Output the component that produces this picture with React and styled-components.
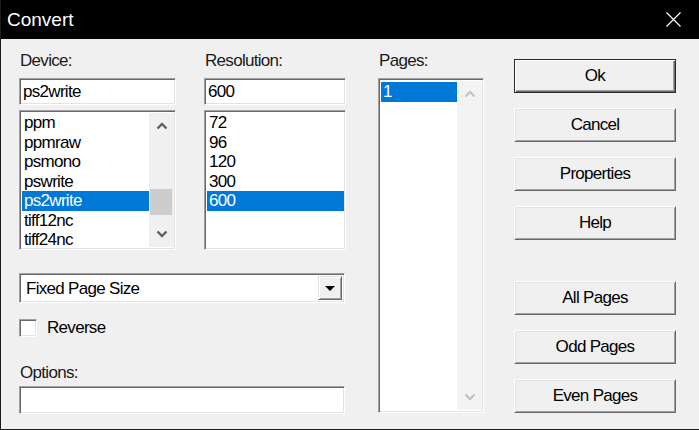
import styled, { createGlobalStyle } from "styled-components";

const GlobalStyle = createGlobalStyle`
  html, body {
    margin: 0;
    padding: 0;
    background: #f0f0f0;
  }
  body {
    font-family: "Liberation Sans", Arial, sans-serif;
  }
`;

const Window = styled.div`
  width: 699px;
  height: 430px;
  box-sizing: border-box;
  display: flex;
  flex-direction: column;
  background: #f0f0f0;
  border-left: 1px solid #1c1c1c;
  border-bottom: 1px solid #1c1c1c;
  font-family: "Liberation Sans", Arial, sans-serif;
  font-size: 17px;
  letter-spacing: -0.7px;
  color: #000;
  overflow: hidden;
`;

const TitleBar = styled.div`
  height: 39px;
  flex-shrink: 0;
  background: #000;
  color: #fff;
  display: flex;
  align-items: center;
  justify-content: space-between;
  padding: 0 18px 0 6px;
  font-size: 19px;
  letter-spacing: 0;
`;

const Client = styled.div`
  flex: 1;
  display: flex;
  padding-left: 18px;
`;

const LeftPane = styled.div`
  width: 327px;
  display: flex;
  flex-direction: column;
`;

const TopRow = styled.div`
  display: flex;
  gap: 28px;
`;

const Field = styled.div`
  width: ${p => p.$width}px;
  display: flex;
  flex-direction: column;
`;

const Label = styled.div`
  height: 20px;
  line-height: 20px;
  margin-top: ${p => p.$top ?? 12}px;
  padding-left: 1px;
  color: #1a1a1a;
`;

const sunken = `
  box-sizing: border-box;
  border: 1px solid;
  border-color: #a0a0a0 #fff #fff #a0a0a0;
  box-shadow: inset 1px 1px #696969, inset -1px -1px #e3e3e3;
  background: #fff;
`;

const TextBox = styled.div`
  ${sunken}
  width: ${p => p.$width ? `${p.$width}px` : "100%"};
  height: ${p => p.$height ?? 27}px;
  margin-top: ${p => p.$top ?? 7}px;
  padding: 1px 3px 0;
  display: flex;
  align-items: center;
`;

const ListFrame = styled.div`
  ${sunken}
  height: ${p => p.$height}px;
  margin-top: ${p => p.$top}px;
  padding: 2px 1px 2px 2px;
  display: flex;
`;

const Items = styled.div`
  flex: 1;
  display: flex;
  flex-direction: column;
  padding-top: ${p => p.$pad ?? 0}px;
`;

const Item = styled.div`
  height: 19.5px;
  line-height: 20px;
  padding-left: 2px;
  white-space: nowrap;
  background: ${p => p.$selected ? "#0078d7" : "transparent"};
  color: ${p => p.$selected ? "#fff" : "#000"};
`;

const ScrollBar = styled.div`
  width: 25px;
  display: flex;
  flex-direction: column;
  background: ${p => p.$disabled ? "#f3f3f3" : "#f0f0f0"};
`;

const ArrowBtn = styled.div`
  height: 26px;
  flex-shrink: 0;
  display: flex;
  align-items: center;
  justify-content: center;
`;

const Track = styled.div`
  flex: 1;
  display: flex;
  flex-direction: column;
  padding: 0 2px 0 1px;
`;

const Thumb = styled.div`
  height: 26px;
  margin-top: ${p => p.$offset}px;
  background: #cdcdcd;
`;

const Combo = styled.div`
  ${sunken}
  width: 326px;
  height: 30px;
  margin-top: 23px;
  padding: 2px;
  display: flex;
  align-items: center;
`;

const ComboText = styled.div`
  flex: 1;
  padding: 2px 0 0 4px;
`;

const DropButton = styled.div`
  box-sizing: border-box;
  width: 24px;
  align-self: stretch;
  background: #f0f0f0;
  border: 1px solid;
  border-color: #e3e3e3 #696969 #696969 #e3e3e3;
  box-shadow: inset 1px 1px #fff, inset -1px -1px #a0a0a0;
  display: flex;
  align-items: center;
  justify-content: center;
`;

const DownTriangle = styled.span`
  width: 0;
  height: 0;
  margin-top: 1px;
  border-left: 5px solid transparent;
  border-right: 5px solid transparent;
  border-top: 5px solid #000;
`;

const CheckRow = styled.label`
  margin-top: 15px;
  height: 19px;
  display: flex;
  align-items: center;
  gap: 10px;
`;

const CheckBox = styled.span`
  ${sunken}
  width: 18px;
  height: 18px;
`;

const PagesCol = styled.div`
  width: 106px;
  margin-left: 32px;
  display: flex;
  flex-direction: column;
`;

const ButtonsCol = styled.div`
  width: 162px;
  margin-left: 30px;
  padding-top: 20px;
  display: flex;
  flex-direction: column;
`;

const ButtonGroup = styled.div`
  display: flex;
  flex-direction: column;
  gap: 15px;
  margin-top: ${p => p.$top ?? 0}px;
`;

const Button = styled.button`
  box-sizing: border-box;
  width: 162px;
  height: 34px;
  padding: 0;
  font: inherit;
  letter-spacing: inherit;
  color: #000;
  background: #f0f0f0;
  border: 1px solid;
  border-color: ${p => p.$default ? "#2a2a2a" : "#fff #696969 #696969 #fff"};
  box-shadow: ${p => p.$default
    ? "inset 1px 1px #fff, inset -1px -1px #696969, inset -2px -2px #a0a0a0"
    : "inset 1px 1px #e3e3e3, inset -1px -1px #a0a0a0"};
  cursor: default;
`;

const Chevron = ({ up, color }) => (
  <svg width="12" height="8" viewBox="0 0 12 8">
    <polyline
      points={up ? "1.5,6.5 6,2 10.5,6.5" : "1.5,1.5 6,6 10.5,1.5"}
      fill="none"
      stroke={color}
      strokeWidth="2.4"
    />
  </svg>
);

const CloseIcon = () => (
  <svg width="15" height="15" viewBox="0 0 15 15">
    <path d="M0.5 0.5 L14.5 14.5 M14.5 0.5 L0.5 14.5" stroke="#fff" strokeWidth="1.2" />
  </svg>
);

function VScroll({ disabled, thumb }) {
  const color = disabled ? "#c3c3c3" : "#606060";
  return (
    <ScrollBar $disabled={disabled}>
      <ArrowBtn><Chevron up color={color} /></ArrowBtn>
      <Track>{thumb != null && <Thumb $offset={thumb} />}</Track>
      <ArrowBtn><Chevron color={color} /></ArrowBtn>
    </ScrollBar>
  );
}

const devices = ["ppm", "ppmraw", "psmono", "pswrite", "ps2write", "tiff12nc", "tiff24nc"];
const resolutions = ["72", "96", "120", "300", "600"];

export default function App() {
  return (
    <>
      <GlobalStyle />
      <Window>
        <TitleBar>
          <span>Convert</span>
          <CloseIcon />
        </TitleBar>
        <Client>
          <LeftPane>
            <TopRow>
              <Field $width={157}>
                <Label>Device:</Label>
                <TextBox>ps2write</TextBox>
                <ListFrame $height={140} $top={5}>
                  <Items>
                    {devices.map(d => (
                      <Item key={d} $selected={d === "ps2write"}>{d}</Item>
                    ))}
                  </Items>
                  <VScroll thumb={50} />
                </ListFrame>
              </Field>
              <Field $width={142}>
                <Label>Resolution:</Label>
                <TextBox>600</TextBox>
                <ListFrame $height={140} $top={5}>
                  <Items>
                    {resolutions.map(r => (
                      <Item key={r} $selected={r === "600"}>{r}</Item>
                    ))}
                  </Items>
                </ListFrame>
              </Field>
            </TopRow>
            <Combo>
              <ComboText>Fixed Page Size</ComboText>
              <DropButton><DownTriangle /></DropButton>
            </Combo>
            <CheckRow>
              <CheckBox />
              <span>Reverse</span>
            </CheckRow>
            <Label $top={26}>Options:</Label>
            <TextBox $width={326} $height={28} $top={3} />
          </LeftPane>
          <PagesCol>
            <Label>Pages:</Label>
            <ListFrame $height={335} $top={7}>
              <Items $pad={1}>
                <Item $selected>1</Item>
              </Items>
              <VScroll disabled />
            </ListFrame>
          </PagesCol>
          <ButtonsCol>
            <ButtonGroup>
              <Button $default>Ok</Button>
              <Button>Cancel</Button>
              <Button>Properties</Button>
              <Button>Help</Button>
            </ButtonGroup>
            <ButtonGroup $top={41}>
              <Button>All Pages</Button>
              <Button>Odd Pages</Button>
              <Button>Even Pages</Button>
            </ButtonGroup>
          </ButtonsCol>
        </Client>
      </Window>
    </>
  );
}
